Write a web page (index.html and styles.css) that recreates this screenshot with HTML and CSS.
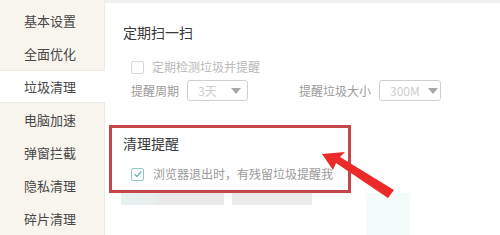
FILE: index.html
```html
<!DOCTYPE html>
<html lang="zh-CN">
<head>
<meta charset="utf-8">
<title>垃圾清理</title>
<link rel="stylesheet" href="styles.css">
</head>
<body>
<div class="app">
  <nav class="sidebar">
    <div class="nav-item">基本设置</div>
    <div class="nav-item">全面优化</div>
    <div class="nav-item active">垃圾清理</div>
    <div class="nav-item">电脑加速</div>
    <div class="nav-item">弹窗拦截</div>
    <div class="nav-item">隐私清理</div>
    <div class="nav-item">碎片清理</div>
  </nav>
  <main class="content">
    <section class="group">
      <h2 class="group-title">定期扫一扫</h2>
      <label class="check disabled"><span class="box"></span>定期检测垃圾并提醒</label>
      <div class="row">
        <div class="field">
          <span class="field-label">提醒周期</span>
          <span class="select s-short"><span class="val">3天</span><span class="caret"></span></span>
        </div>
        <div class="field">
          <span class="field-label">提醒垃圾大小</span>
          <span class="select s-size"><span class="val">300M</span><span class="caret"></span></span>
        </div>
      </div>
    </section>
    <section class="group highlight">
      <h2 class="group-title">清理提醒</h2>
      <label class="check checked"><span class="box"><svg viewBox="0 0 12 12" width="10" height="10"><path d="M2 6.2 L4.8 9 L10 3" fill="none" stroke="#6cb8b0" stroke-width="1.6"/></svg></span>浏览器退出时，有残留垃圾提醒我</label>
    </section>
    <div class="blur-row">
      <span class="blur b1"></span>
      <span class="blur b2"></span>
    </div>
    <span class="glare"></span>
    <svg class="arrow" width="90" height="60" viewBox="0 0 90 60">
      <polygon points="0,2 23,0 18,5 72,38 66,46 14,11 11,18" fill="#ec2a2a"/>
    </svg>
  </main>
</div>
</body>
</html>
```
FILE: styles.css
```css
html, body {
  margin: 0;
  padding: 0;
  background: #ffffff;
}
body {
  font-family: "Noto Sans CJK SC", "Noto Sans", sans-serif;
  color: #333;
  width: 500px;
  height: 235px;
  overflow: hidden;
}
.app {
  display: flex;
  height: 235px;
}
.sidebar {
  width: 105px;
  flex: none;
  background: #f8f5ef;
  border-right: 1px solid #ece9e3;
  padding-top: 4px;
  box-sizing: border-box;
}
.nav-item {
  height: 33px;
  line-height: 33px;
  padding-left: 24px;
  font-size: 13px;
  color: #474747;
}
.nav-item.active {
  background: #ffffff;
  margin-right: -1px;
  border-top: 1px solid #eeebe5;
  border-bottom: 1px solid #eeebe5;
  height: 31px;
  line-height: 31px;
}
.content {
  position: relative;
  flex: 1;
  border-top: 3px solid #f0f0f0;
  padding-left: 4px;
  padding-top: 19px;
}
.group-title {
  margin: 0;
  font-size: 14px;
  font-weight: normal;
  line-height: 20px;
  color: #383838;
  padding-left: 14px;
}
.check {
  display: flex;
  align-items: center;
  gap: 8px;
  font-size: 12px;
  line-height: 18px;
  margin-top: 16px;
  padding-left: 22px;
}
.box {
  width: 11px;
  height: 11px;
  border: 1px solid #d6d6d6;
  border-radius: 2px;
  display: flex;
  align-items: center;
  justify-content: center;
  background: #fff;
}
.check.disabled { color: #b9b9b9; }
.check.checked { color: #9a9a9a; margin-top: 12px; gap: 9px; }
.check.checked .box { border-color: #8ccac3; }
.row {
  display: flex;
  align-items: center;
  margin-top: 4px;
  padding-left: 22px;
  gap: 51px;
}
.field {
  display: flex;
  align-items: center;
  gap: 8px;
}
.field-label {
  font-size: 12px;
  color: #9a9a9a;
}
.select {
  display: flex;
  align-items: center;
  justify-content: space-between;
  height: 19px;
  border: 1px solid #cfcfcf;
  border-radius: 3px;
  box-sizing: content-box;
  padding: 0 6px 0 10px;
  font-size: 12px;
  color: #cdcdcd;
}
.s-short { width: 43px; }
.s-size { width: 48px; padding-left: 10px; padding-right: 2px; }
.caret {
  width: 0;
  height: 0;
  border-left: 5px solid transparent;
  border-right: 5px solid transparent;
  border-top: 6px solid #a8a8a8;
}
.highlight {
  margin-top: 24px;
  width: 236px;
  height: 57px;
  border: 3px solid #c6474a;
  padding-top: 5px;
  box-sizing: content-box;
  position: relative;
  z-index: 1;
}
.highlight .group-title { padding-left: 11px; }
.highlight .check { padding-left: 19px; }
.blur-row {
  display: flex;
  gap: 8px;
  margin-top: -3px;
  padding-left: 12px;
}
.blur {
  height: 15px;
  display: block;
}
.b1 {
  width: 103px;
  background: linear-gradient(90deg, #e6f1f0 0, #e9eeee 30%, #eaeaea 40%, #e9e9e9 100%);
}
.b2 {
  width: 80px;
  background: #ebebeb;
}
.glare {
  position: absolute;
  left: 261px;
  top: 190px;
  width: 44px;
  height: 45px;
  background: #f3fbfb;
}
.arrow {
  position: absolute;
  left: 217px;
  top: 149px;
  z-index: 2;
}
```
